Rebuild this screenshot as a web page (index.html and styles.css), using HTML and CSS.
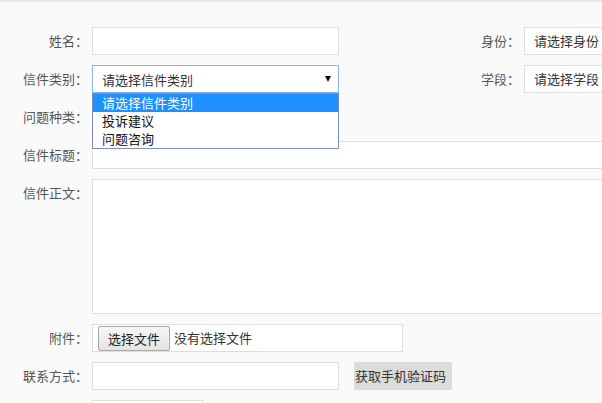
FILE: index.html
```html
<!DOCTYPE html>
<html lang="zh-CN">
<head>
<meta charset="utf-8">
<title>信件提交</title>
<link rel="stylesheet" href="styles.css">
</head>
<body>
<div class="topbar"></div>
<form class="form">
  <div class="row">
    <label class="lbl">姓名：</label>
    <div class="input w-mid"></div>
    <label class="lbl lbl-r">身份：</label>
    <div class="input select-r">请选择身份</div>
  </div>
  <div class="row">
    <label class="lbl">信件类别：</label>
    <div class="select focus w-mid">
      <span>请选择信件类别</span>
      <span class="arrow"></span>
      <ul class="dropdown">
        <li class="active">请选择信件类别</li>
        <li>投诉建议</li>
        <li>问题咨询</li>
      </ul>
    </div>
    <label class="lbl lbl-r">学段：</label>
    <div class="input select-r">请选择学段</div>
  </div>
  <div class="row">
    <label class="lbl">问题种类：</label>
    <div class="input w-mid"></div>
  </div>
  <div class="row">
    <label class="lbl">信件标题：</label>
    <div class="input w-full"></div>
  </div>
  <div class="row row-top">
    <label class="lbl">信件正文：</label>
    <div class="input w-full textarea"></div>
  </div>
  <div class="row">
    <label class="lbl">附件：</label>
    <div class="input file">
      <span class="file-btn">选择文件</span>
      <span class="file-text">没有选择文件</span>
    </div>
  </div>
  <div class="row">
    <label class="lbl">联系方式：</label>
    <div class="input w-mid"></div>
    <span class="code-btn">获取手机验证码</span>
  </div>
  <div class="row">
    <label class="lbl"></label>
    <div class="input w-small"></div>
  </div>
</form>
</body>
</html>
```
FILE: styles.css
```css
html, body {
  margin: 0;
  padding: 0;
  overflow: hidden;
  background: #fafafa;
  font-family: "Noto Sans CJK SC", "Microsoft YaHei", sans-serif;
  font-size: 13px;
  color: #333;
}
.topbar {
  height: 2px;
  background: #e8e8e8;
}
.form {
  margin: 25px 0 0 0;
  display: flex;
  flex-direction: column;
  gap: 10px;
  width: 760px;
}
.row {
  display: flex;
  align-items: center;
  height: 28px;
}
.row-top {
  align-items: flex-start;
  height: auto;
}
.lbl {
  width: 88px;
  margin-right: 4px;
  text-align: right;
  color: #555;
  line-height: 28px;
  flex: none;
}
.lbl-r {
  width: 181px;
}
.input {
  box-sizing: border-box;
  height: 28px;
  border: 1px solid #dedede;
  background: #fff;
  flex: none;
  line-height: 26px;
}
.w-mid { width: 247px; }
.w-small { width: 111px; }
.w-full { width: 640px; }
.textarea { height: 135px; }
.select-r {
  width: 120px;
  padding-left: 9px;
  color: #333;
}
.select {
  position: relative;
  box-sizing: border-box;
  height: 28px;
  background: #fff;
  flex: none;
  display: flex;
  align-items: center;
  justify-content: space-between;
  padding: 0 7px 0 9px;
}
.select.focus {
  border: 1px solid #8fb2ea;
}
.arrow {
  width: 0;
  height: 0;
  border-left: 3.5px solid transparent;
  border-right: 3.5px solid transparent;
  border-top: 6px solid #111;
  margin-top: -1px;
}
.dropdown {
  position: absolute;
  left: -1px;
  top: 27px;
  width: 247px;
  box-sizing: border-box;
  margin: 0;
  padding: 0;
  list-style: none;
  background: #fff;
  border: 1px solid #7d8dbf;
  z-index: 10;
}
.dropdown li {
  height: 18px;
  line-height: 18px;
  padding-left: 9px;
  color: #111;
}
.dropdown li.active {
  background: #1e90ff;
  color: #fff;
}
.file {
  width: 311px;
  display: flex;
  align-items: center;
  padding-left: 5px;
}
.file-btn {
  box-sizing: border-box;
  height: 25px;
  line-height: 23px;
  padding: 0 9px;
  border: 1px solid #a9a9a9;
  border-radius: 2px;
  background: linear-gradient(#f6f6f6, #e4e4e4);
  color: #222;
}
.file-text {
  margin-left: 4px;
  color: #333;
}
.code-btn {
  margin-left: 15px;
  height: 28px;
  line-height: 28px;
  padding: 0 0 0 1px;
  width: 98px;
  box-sizing: border-box;
  background: #dcdcdc;
  color: #333;
  white-space: nowrap;
}
```
